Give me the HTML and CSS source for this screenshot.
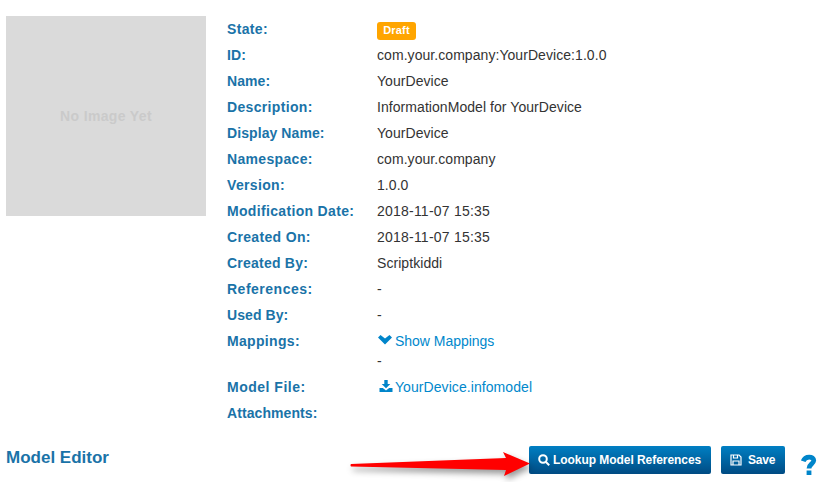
FILE: index.html
```html
<!DOCTYPE html>
<html lang="en">
<head>
<meta charset="utf-8">
<title>Model Details</title>
<link rel="stylesheet" href="styles.css">
</head>
<body>
<main class="details">
  <div class="thumb">No Image Yet</div>
  <dl class="props">
    <dt>State:</dt><dd><span class="label">Draft</span></dd>
    <dt class="tight">ID:</dt><dd>com.your.company:YourDevice:1.0.0</dd>
    <dt class="tight">Name:</dt><dd>YourDevice</dd>
    <dt>Description:</dt><dd>InformationModel for YourDevice</dd>
    <dt class="tight">Display Name:</dt><dd>YourDevice</dd>
    <dt>Namespace:</dt><dd>com.your.company</dd>
    <dt>Version:</dt><dd>1.0.0</dd>
    <dt>Modification Date:</dt><dd class="date">2018-11-07 15:35</dd>
    <dt>Created On:</dt><dd class="date">2018-11-07 15:35</dd>
    <dt class="created">Created By:</dt><dd>Scriptkiddi</dd>
    <dt class="wide">References:</dt><dd>-</dd>
    <dt class="tight">Used By:</dt><dd>-</dd>
    <dt>Mappings:</dt><dd><a class="link"><svg width="16" height="14" viewBox="0 0 16 14"><path d="M1 4.500 3.500 2 8 5.600 12.500 2 15 4.500 8 11.500z"/></svg>Show Mappings</a><div>-</div></dd>
    <dt class="wide">Model File:</dt><dd><a class="link file"><svg width="14" height="14" viewBox="0 0 14 14"><path d="M5.300 1h3.400v4h2.600L7 9.300 2.700 5h2.600zM.5 9h3.300L7 11.400 10.200 9h3.300v4H.5z"/></svg>YourDevice.infomodel</a></dd>
    <dt class="tight">Attachments:</dt><dd></dd>
  </dl>
</main>
<section class="editor">
  <h2>Model Editor</h2>
  <svg class="arrow" width="180" height="36" viewBox="0 0 180 36"><path d="M1 18Q0 19 1 20.500L156 24 154 30 180 17.500 153 6 156 12z"/></svg>
  <button class="btn lookup"><svg width="12" height="12" viewBox="0 0 12 12"><circle cx="5" cy="5" r="3.800"/><path d="m7.700 7.700 3.500 3.500"/></svg>Lookup Model References</button>
  <button class="btn save"><svg width="12" height="12" viewBox="0 0 12 12"><path d="M1 1h8l2 2v8H1zM3.500 1v3h4V1M3 11V7h6v4"/></svg>Save</button>
  <svg class="help" width="16" height="22" viewBox="0 0 16 22"><path d="M2.200 7.200C4 1.500 13 2 12.700 6.600 12.500 9.800 8 10.200 8 14.500"/><path d="M8 16.500v4.500"/></svg>
</section>
</body>
</html>
```
FILE: styles.css
```css
body { margin: 0; padding: 16px 6px 0; background: #fff; color: #333; font: 14px/20px "Liberation Sans", Arial, sans-serif; overflow: hidden; }
.details { display: flex; gap: 21px; height: 430px; }
.thumb { width: 200px; height: 200px; background: #dadada; color: #cacaca; font-weight: bold; letter-spacing: .35px; line-height: 200px; text-align: center; }
.props { display: grid; grid-template-columns: 150px auto; align-content: start; row-gap: 6px; margin: 3px 0 0; }
dt { color: #1a73a8; font-weight: bold; letter-spacing: .33px; }
.tight { letter-spacing: .08px; }
.created { letter-spacing: .23px; }
.wide { letter-spacing: .5px; }
dd { margin: 0; letter-spacing: .06px; }
.date { letter-spacing: .22px; }
dt, dd { min-height: 20px; }
.label { display: block; box-sizing: border-box; width: 39px; height: 18px; margin-top: 3px; margin-bottom: -1px; padding: 1px 0 0; border-radius: 3px; background: #ffa500; color: #fff; font-size: 11px; font-weight: bold; line-height: 15px; text-align: center; letter-spacing: .2px; }
.link { display: flex; align-items: center; gap: 2px; color: #0088cc; letter-spacing: -.02px; }
.link svg { fill: #0085ca; flex: none; margin-top: -2px; }
.file { padding-left: 2px; letter-spacing: .07px; }
.editor { display: flex; align-items: flex-start; }
h2 { margin: 2px auto 0 0; color: #1a73a8; font-size: 17px; line-height: 20px; }
.arrow { position: relative; z-index: 1; margin-right: -1px; fill: #f00; overflow: visible; filter: drop-shadow(2px 4px 3px rgba(0, 0, 0, .4)); }
.btn { display: flex; align-items: center; height: 28px; box-sizing: border-box; padding: 0 0 1px; border: 0; border-radius: 2px; color: #fff; background: linear-gradient(#007fc3, #004b83); font: bold 12px "Liberation Sans", Arial, sans-serif; white-space: nowrap; }
.lookup { width: 182px; padding-left: 9px; gap: 3px; letter-spacing: -.05px; }
.save { width: 64px; margin-left: 10px; padding-left: 9px; gap: 6px; letter-spacing: -.2px; }
.btn svg { flex: none; fill: none; stroke: #fff; stroke-width: 2; }
.save svg { stroke-width: 1.2; }
.help { margin: 8px 4px 0 16px; fill: none; stroke: #0085ca; stroke-width: 4.8; }
```
